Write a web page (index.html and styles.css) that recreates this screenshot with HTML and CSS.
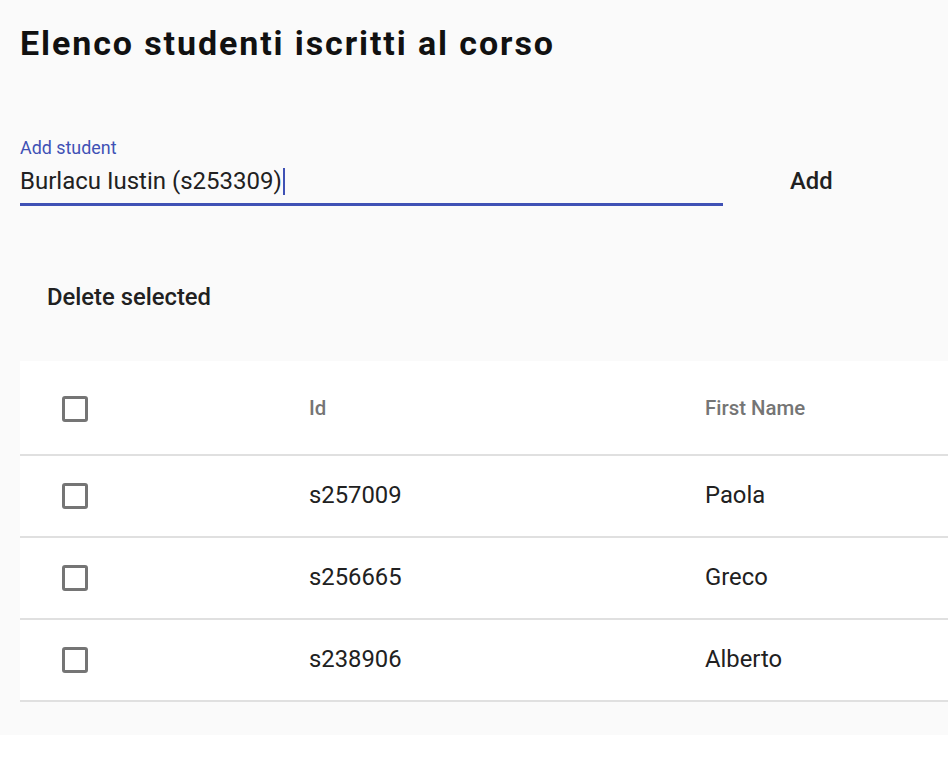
FILE: index.html
```html
<!DOCTYPE html>
<html lang="it">
<head>
<meta charset="utf-8">
<title>Elenco studenti</title>
<link rel="stylesheet" href="styles.css">
</head>
<body>
<div class="page">
  <h1 class="title">Elenco studenti iscritti al corso</h1>
  <div class="add-row">
    <div class="field">
      <label class="field-label">Add student</label>
      <div class="field-input">Burlacu Iustin (s253309)<span class="caret"></span></div>
      <div class="field-line"></div>
    </div>
    <button class="btn btn-add">Add</button>
  </div>
  <button class="btn btn-delete">Delete selected</button>
  <table class="students">
    <thead>
      <tr>
        <th class="col-check"><span class="checkbox"></span></th>
        <th class="col-id">Id</th>
        <th class="col-name">First Name</th>
      </tr>
    </thead>
    <tbody>
      <tr>
        <td class="col-check"><span class="checkbox"></span></td>
        <td>s257009</td>
        <td>Paola</td>
      </tr>
      <tr>
        <td class="col-check"><span class="checkbox"></span></td>
        <td>s256665</td>
        <td>Greco</td>
      </tr>
      <tr>
        <td class="col-check"><span class="checkbox"></span></td>
        <td>s238906</td>
        <td>Alberto</td>
      </tr>
    </tbody>
  </table>
</div>
</body>
</html>
```

FILE: styles.css
```css
html, body {
  margin: 0;
  padding: 0;
  background: #ffffff;
}

body {
  font-family: Roboto, "Liberation Sans", Arial, sans-serif;
  color: #212121;
}

.page {
  background: #fafafa;
  padding: 23px 0 33px 20px;
}

.title {
  margin: 0;
  font-size: 34px;
  line-height: 40px;
  font-weight: 700;
  letter-spacing: 1.9px;
  color: #111111;
}

.add-row {
  display: flex;
  align-items: flex-start;
  margin-top: 75px;
}

.field {
  width: 703px;
  display: flex;
  flex-direction: column;
}

.field-label {
  font-size: 17.9px;
  line-height: 20px;
  color: #3f51b5;
  height: 20px;
}

.field-input {
  margin-top: 9px;
  font-size: 24px;
  line-height: 28px;
  height: 28px;
  color: #212121;
  white-space: nowrap;
  display: flex;
  align-items: center;
}

.caret {
  display: inline-block;
  width: 2px;
  height: 27px;
  background: #3f51b5;
  margin-left: 1px;
}

.field-line {
  margin-top: 8px;
  height: 3px;
  background: #3f51b5;
}

.btn {
  font-family: Roboto, "Liberation Sans", Arial, sans-serif;
  background: transparent;
  border: 0;
  padding: 0 27px;
  font-size: 23.8px;
  line-height: 28px;
  font-weight: 500;
  color: #212121;
  cursor: pointer;
}

.btn-add {
  margin-top: 29px;
  margin-left: 40px;
}

.btn-delete {
  display: block;
  margin-top: 77px;
}

.students {
  margin-top: 50px;
  border-collapse: collapse;
  background: #ffffff;
  width: 100%;
  table-layout: fixed;
}

.students th,
.students td {
  text-align: left;
  padding: 0;
  border-bottom: 2px solid #e0e0e0;
  vertical-align: middle;
}

.students th {
  height: 93px;
  font-size: 20.4px;
  font-weight: 500;
  color: #757575;
}

.students td {
  height: 77px;
  padding-bottom: 3px;
  font-size: 23.8px;
  font-weight: 400;
  color: #212121;
}

.col-check {
  width: 289px;
  padding-left: 42px !important;
  box-sizing: border-box;
}

.col-id {
  width: 396px;
}

.checkbox {
  display: block;
  width: 26px;
  height: 26px;
  box-sizing: border-box;
  border: 3px solid #757575;
  border-radius: 3px;
  margin-top: 3px;
}
```
